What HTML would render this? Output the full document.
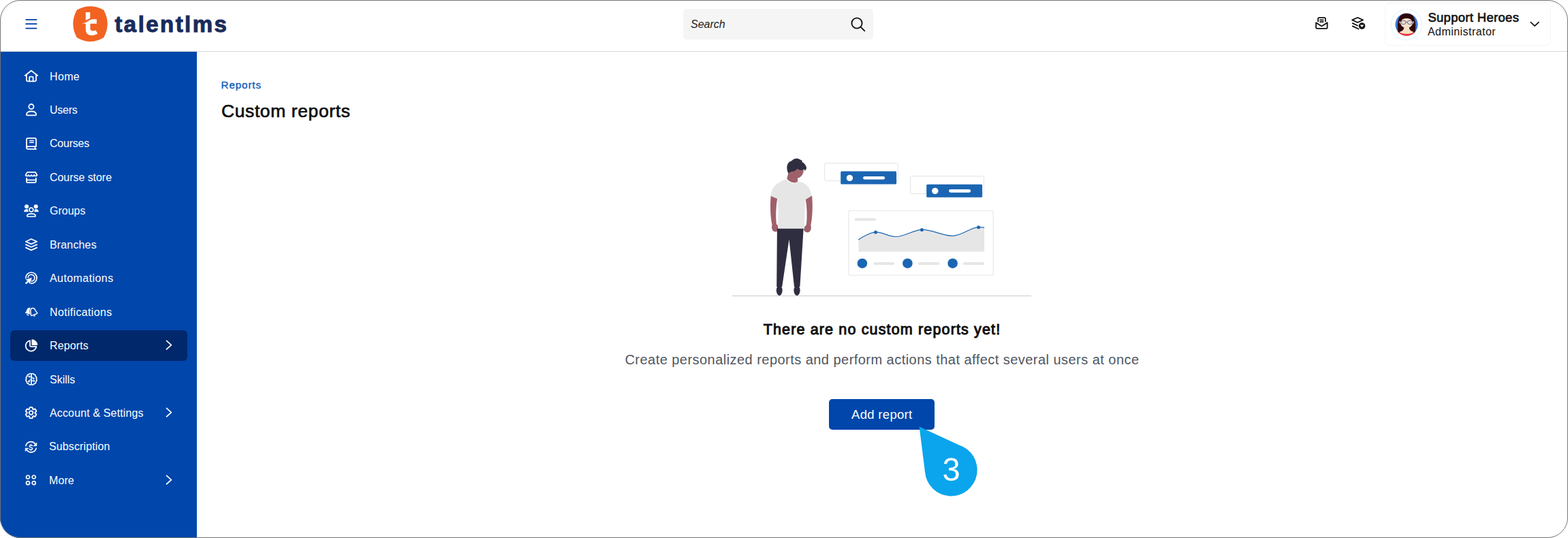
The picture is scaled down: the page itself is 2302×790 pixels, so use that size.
<!DOCTYPE html>
<html lang="en">
<head>
<meta charset="utf-8">
<title>Custom reports - TalentLMS</title>
<style>
*{box-sizing:border-box;margin:0;padding:0}
html,body{width:2302px;height:790px;overflow:hidden;background:#fff}
body{position:relative;font-family:"Liberation Sans",sans-serif;color:#0f0f0f}
.frame{position:absolute;left:0;top:0;width:2302px;height:790px;border:1px solid #747474;border-radius:30px;pointer-events:none;box-shadow:0 0 0 40px #fff;z-index:50}
header{position:absolute;left:0;top:0;width:2302px;height:76px;background:#fff;border-bottom:1px solid #d6dadd}
.side{position:absolute;left:0;top:76px;width:288.600px;height:714px;background:#0046ab}
.side .item{position:absolute;left:15px;width:260px;height:45px;border-radius:6px;color:#fff;font-size:16px;text-decoration:none;margin-top:-76px}
.side .item.active{background:#00286b}
.side .ic{position:absolute;left:19px;top:10.05px;width:24px;height:24px;overflow:visible}
.side .lb{position:absolute;top:0;line-height:45px;white-space:nowrap}
.side .chev{position:absolute;left:229px;top:14.200px;width:10px;height:16px;overflow:visible}
.abs{position:absolute;white-space:nowrap}

</style>
</head>
<body>
<header>
<svg class="abs" style="left:37px;top:27px" width="18" height="16" viewBox="0 0 18 16"><path d="M1.200 1.800H16.600M1.200 8.200H16.600M1.200 14.600H16.600" stroke="#0038a8" stroke-width="1.800" stroke-linecap="round" fill="none"/></svg>
<svg class="abs" style="left:107px;top:9px" width="52" height="53" viewBox="0 0 52 53"><path d="M6.500 6.500 Q25.700 -3.900 44.500 6.500 Q55.100 26 44.500 45.400 Q25.700 56.600 6.500 45.400 Q-3.900 26 6.500 6.500Z" fill="#f26322" stroke="#f26322" stroke-width="2" stroke-linejoin="round"/><path d="M18.800 8.900 H25.300 V17.400 C23.500 18.600 21 20 18.800 20.900Z" fill="#fff"/><path d="M13 25.600 C17 25.300 21 23.200 24 21 C25.500 20 27 19.300 29 19.200 H34.900 V25.700 H25.500 V33 C25.500 36.200 28.500 37.200 33.400 35.400 L36.500 40.300 C31 43.800 25 44 21.500 41 C19.500 39.200 18.800 36.500 18.800 33 V25.700Z" fill="#fff"/></svg>
<div class="abs" id="logo" style="left:168.400px;top:16.800px;font-size:33px;font-weight:bold;line-height:38px;color:#1a2b5c;-webkit-text-stroke:1px #1a2b5c;letter-spacing:2.450px">talentlms</div>
<div class="abs" style="left:1002.700px;top:12.700px;width:279.700px;height:45.700px;background:#f5f5f5;border-radius:5px"></div>
<div class="abs" id="search" style="left:1014px;top:26px;font-size:16px;font-style:italic;line-height:20px;color:#222">Search</div>
<svg class="abs" style="left:1248px;top:24px" width="24" height="24" viewBox="0 0 24 24"><circle cx="10" cy="10" r="7.6" fill="none" stroke="#111" stroke-width="1.9"/><path d="M15.6 15.6 L21.3 21.3" stroke="#111" stroke-width="1.9" stroke-linecap="round"/></svg>
<svg class="abs" style="left:1930px;top:24px" width="22" height="20" viewBox="0 0 22 20"><g fill="none" stroke="#111" stroke-width="1.800" stroke-linecap="round" stroke-linejoin="round"><path d="M5.100 7.400 V3.500 a1.600 1.600 0 0 1 1.600 -1.600 h7.600 a1.600 1.600 0 0 1 1.600 1.600 v3.900"/><path d="M8 5.300h4.700M8 8h4.700" stroke-width="1.750"/><path d="M2.100 9.300 L9.400 14 a1.700 1.700 0 0 0 1.900 0 L18.600 9.300 V16.500 a1.400 1.400 0 0 1 -1.400 1.400 H3.500 a1.400 1.400 0 0 1 -1.400 -1.400Z"/></g></svg>
<svg class="abs" style="left:1983px;top:24px" width="23" height="20" viewBox="0 0 23 20"><g fill="none" stroke="#111" stroke-width="1.800" stroke-linecap="round" stroke-linejoin="round"><path d="M2.100 5.400 L10.150 1.800 L18 5.400 L10.150 9Z"/><path d="M2.700 10.100 L10 13.500M2.700 14.400 L11.500 18.500"/></g><circle cx="16.500" cy="14.100" r="4.850" fill="#111"/><path d="M13.900 12.800 h5.200 l-2.600 3.200z" fill="#fff" stroke="#fff" stroke-width="0.300" stroke-linejoin="round"/></svg>
<div class="abs" style="left:2032.800px;top:4.100px;width:243.800px;height:62.900px;border:1px solid #f5f5f6;border-radius:7px"></div>
<svg class="abs" style="left:2041.400px;top:12px" width="48" height="48" viewBox="0 0 48 48"><defs><clipPath id="av"><circle cx="24" cy="24" r="16.600"/></clipPath></defs><circle cx="24" cy="24" r="22.600" fill="none" stroke="#dbe8f9" stroke-width="0.800" stroke-dasharray="103 2 3.500 2 200"/><g clip-path="url(#av)"><rect x="0" y="0" width="48" height="48" fill="#3d7ad9"/><path d="M11.500 36 C9.500 22 11 7.500 24 7.500 C37 7.500 38.500 22 36.500 36 Z" fill="#2e0609"/><path d="M6 48 C6 38 13 33.500 24 33.500 C35 33.500 42 38 42 48Z" fill="#ee2e2e"/><path d="M13.500 35 C17 33.800 19.800 32.800 20.300 28 h7.400 c0.500 4.800 3.300 5.800 6.800 7 C30.500 38.800 17.500 38.800 13.500 35z" fill="#f7e0c6"/><ellipse cx="24" cy="21.800" rx="8.700" ry="7.500" fill="#f7e0c6"/><path d="M15.500 20.500 l-2.800 -1.200 l2.600 5zM32.500 20.500 l2.800 -1.200 l-2.600 5z" fill="#f7e0c6"/><path d="M13.500 19.500 C16 13.500 32 13.500 34.500 19.500 C35 11.500 30 8 24 8 C18 8 13 11.500 13.500 19.500z" fill="#2e0609"/><g fill="#f3dcc8" fill-opacity="0.500" stroke="#5a67a8" stroke-width="1"><rect x="15.800" y="18.300" width="7" height="5.200" rx="2.500"/><rect x="25.400" y="18.300" width="7" height="5.200" rx="2.500"/><path d="M22.800 20.300h2.600M15.800 20l-2 -0.600M32.400 20l2 -0.600" fill="none"/></g></g></svg>
<div class="abs" id="uname" style="left:2096.400px;top:15.200px;font-size:18.400px;line-height:22px;color:#111;-webkit-text-stroke:0.650px #111;letter-spacing:0.360px">Support Heroes</div>
<div class="abs" id="urole" style="left:2096px;top:37.400px;font-size:16px;line-height:20px;color:#111;letter-spacing:0.45px">Administrator</div>
<svg class="abs" style="left:2245px;top:30px" width="16" height="10" viewBox="0 0 16 10"><path d="M2.300 2.700 L8.150 8.200 L14 2.700" fill="none" stroke="#111" stroke-width="1.700" stroke-linecap="round" stroke-linejoin="round"/></svg>
</header>
<nav class="side">
<a class="item" style="top:90px"><svg class="ic" viewBox="-12 -12 24 24"><g fill="none" stroke="#fff" stroke-width="1.8" stroke-linecap="round" stroke-linejoin="round"><path d="M-9.200 -1 L-0.100 -8.200 L9.100 -1"/><path d="M-7.100 -2.500 V5.600 a1.800 1.800 0 0 0 1.800 1.800 H5.200 a1.800 1.800 0 0 0 1.800 -1.800 V-2.500"/><path d="M-2.800 7.400 V1.700 a1.100 1.100 0 0 1 1.100 -1.100 H1.500 a1.100 1.100 0 0 1 1.100 1.100 V7.400"/></g></svg><span class="lb" style="left:58px;letter-spacing:0.35px">Home</span></a>
<a class="item" style="top:139px"><svg class="ic" viewBox="-12 -12 24 24"><g fill="none" stroke="#fff" stroke-width="1.8" stroke-linecap="round" stroke-linejoin="round"><circle cx="-0.100" cy="-4.400" r="3.600"/><path d="M-7.100 7.300 C-7.100 4.300 -4.500 2.500 0 2.500 C4.500 2.500 7.100 4.300 7.100 7.300 a1 1 0 0 1 -1 1 H-6.100 a1 1 0 0 1 -1 -1Z"/></g></svg><span class="lb" style="left:58px;letter-spacing:-0.25px">Users</span></a>
<a class="item" style="top:188px"><svg class="ic" viewBox="-12 -12 24 24"><g fill="none" stroke="#fff" stroke-width="1.8" stroke-linecap="round" stroke-linejoin="round"><path d="M7 8.900 H-5 a1.900 1.900 0 0 1 0 -3.800 H7 V-5.200 a2 2 0 0 0 -2 -2 H-4.800 a2.200 2.200 0 0 0 -2.200 2.200 V7"/><path d="M5.500 5.100 V8.900"/><path d="M-2.300 -3.500 H3.300 M-2.300 -0.700 H3.300" stroke-width="1.600"/></g></svg><span class="lb" style="left:58px;letter-spacing:-0.23px">Courses</span></a>
<a class="item" style="top:238px"><svg class="ic" viewBox="-12 -12 24 24"><g fill="none" stroke="#fff" stroke-width="1.8" stroke-linecap="round" stroke-linejoin="round"><path d="M-5.800 -7.200 H5.800 L8.400 -3.100 a2.100 1.400 0 0 1 -4.200 0 a2.100 1.400 0 0 1 -4.200 0 a2.100 1.400 0 0 1 -4.200 0 a2.100 1.400 0 0 1 -4.200 0 Z"/><path d="M-6.900 0.900 V6.400 a1.800 1.800 0 0 0 1.800 1.800 H5 a1.800 1.800 0 0 0 1.800 -1.800 V0.900" stroke-linecap="butt"/><path d="M-6.900 4.400 H6.800"/></g></svg><span class="lb" style="left:58px;letter-spacing:-0.05px">Course store</span></a>
<a class="item" style="top:287px"><svg class="ic" viewBox="-12 -12 24 24"><circle cx="-6.900" cy="-5.750" r="3" fill="#fff"/><circle cx="6.700" cy="-5.750" r="3" fill="#fff"/><path d="M-10.500 1.700 C-10.500 -0.300 -9 -1.500 -6.900 -1.500 C-4.500 -1.500 -3 -0.300 -3 1.700Z M10.300 1.700 C10.300 -0.300 8.800 -1.500 6.700 -1.500 C4.300 -1.500 2.800 -0.300 2.800 1.700Z" fill="#fff" stroke="#fff" stroke-width="0.800" stroke-linejoin="round"/><circle cx="-0.100" cy="-0.900" r="5" fill="#0046ab"/><g fill="none" stroke="#fff" stroke-width="1.7" stroke-linecap="round" stroke-linejoin="round"><circle cx="-0.100" cy="-0.900" r="3"/><path d="M-6.200 8.200 C-6.200 6.200 -4 4.900 -0.050 4.900 C4 4.900 6.100 6.200 6.100 8.200 a0.800 0.800 0 0 1 -0.800 0.800 H-5.400 a0.800 0.800 0 0 1 -0.800 -0.800Z"/></g></svg><span class="lb" style="left:58px;letter-spacing:0px">Groups</span></a>
<a class="item" style="top:337px"><svg class="ic" viewBox="-12 -12 24 24"><g fill="none" stroke="#fff" stroke-width="1.8" stroke-linecap="round" stroke-linejoin="round"><path d="M-8.200 -4.300 L-0.100 -8.050 L8.200 -4.300 L-0.100 -0.650Z"/><path d="M-8.100 0.150 L-0.100 3.800 L8.200 0.150"/><path d="M-8.100 4.600 L-0.100 8.350 L8.200 4.600"/></g></svg><span class="lb" style="left:58px;letter-spacing:0.15px">Branches</span></a>
<a class="item" style="top:386px"><svg class="ic" viewBox="-12 -12 24 24"><g fill="none" stroke="#fff" stroke-width="1.7" stroke-linecap="round" stroke-linejoin="round"><path d="M-8.100 0.650 A8.100 8.100 0 1 1 -0.600 8.200"/><path d="M-4.750 -0.700 A4.850 4.850 0 1 1 0.500 4.950"/></g><path d="M0.400 0.300 L-7.800 2.700 L-5.100 4.100 L-8.700 7.700 L-7.400 9 L-3.800 5.400 L-2.400 8.400Z" fill="#fff" stroke="#fff" stroke-width="0.700" stroke-linejoin="round"/></svg><span class="lb" style="left:58px;letter-spacing:0.42px">Automations</span></a>
<a class="item" style="top:436px"><svg class="ic" viewBox="-12 -12 24 24"><g transform="translate(0 0.450)"><path d="M-2.600 -6.600 C-5.500 -6.800 -6.500 -3.500 -7.200 -1.800 C-7.600 -0.800 -8.400 -0.200 -8.900 0.400 C-9.100 0.900 -8.900 1.300 -8.300 1.500 L-2.400 3 C-1.800 3 -1.700 2.400 -1.800 1.800 C-2.600 -0.800 -2.400 -3.600 -1.300 -5.600 C-1.600 -6.100 -2 -6.500 -2.600 -6.600Z" fill="#fff"/><path d="M1.800 -6 C-0.600 -5.700 -1.400 -3.200 -1.100 -0.800 L-0.500 4.200 C-0.400 4.900 0 5.100 0.600 4.900 L8.200 2 C8.800 1.700 8.900 1.200 8.500 0.700 C7.300 -0.200 6.500 -1.600 5.700 -3.200 C4.900 -5 3.700 -6.200 1.800 -6Z" fill="#0046ab" stroke="#0046ab" stroke-width="2.700" stroke-linejoin="round"/><path d="M1.800 -6 C-0.600 -5.700 -1.400 -3.200 -1.100 -0.800 L-0.500 4.200 C-0.400 4.900 0 5.100 0.600 4.900 L8.200 2 C8.800 1.700 8.900 1.200 8.500 0.700 C7.300 -0.200 6.500 -1.600 5.700 -3.200 C4.900 -5 3.700 -6.200 1.800 -6Z" fill="none" stroke="#fff" stroke-width="1.500" stroke-linejoin="round"/><path d="M-6.300 3.600 L-4.200 4.500 M3.500 5.800 L5.500 4.900" stroke="#fff" stroke-width="1.300" stroke-linecap="round" fill="none"/></g></svg><span class="lb" style="left:58px;letter-spacing:0.34px">Notifications</span></a>
<a class="item active" style="top:485px"><svg class="ic" viewBox="-12 -12 24 24"><g transform="translate(0 0.550)"><path d="M0.900 -1.100 V-8.800 A7.900 7.900 0 0 1 8.800 -1.100Z" fill="#fff" stroke="#fff" stroke-width="0.900" stroke-linejoin="round"/><path d="M-2 -7.500 A7.850 7.850 0 1 0 7.350 1.300 H-0.500 a1.500 1.500 0 0 1 -1.500 -1.500 Z" fill="none" stroke="#fff" stroke-width="1.8" stroke-linecap="round" stroke-linejoin="round"/></g></svg><span class="lb" style="left:58px;letter-spacing:0.12px">Reports</span><svg class="chev" viewBox="0 0 10 16"><path d="M0.550 1.450 L7.450 7.600 L0.550 13.750" fill="none" stroke="#fff" stroke-width="1.700" stroke-linecap="round" stroke-linejoin="round"/></svg></a>
<a class="item" style="top:535px"><svg class="ic" viewBox="-12 -12 24 24"><g fill="none" stroke="#fff" stroke-width="1.7" stroke-linecap="round" stroke-linejoin="round"><path d="M0 -7.400 A2.100 2.100 0 0 0 -3.800 -7.200 A2.400 2.400 0 0 0 -6.200 -4.300 A2.500 2.500 0 0 0 -7.300 -0.700 A2.500 2.500 0 0 0 -6.700 3.200 A2.500 2.500 0 0 0 -4.200 6.300 A2.300 2.300 0 0 0 0 6.900 A2.300 2.300 0 0 0 4.200 6.300 A2.500 2.500 0 0 0 6.700 3.200 A2.500 2.500 0 0 0 7.300 -0.700 A2.500 2.500 0 0 0 6.200 -4.300 A2.400 2.400 0 0 0 3.800 -7.200 A2.100 2.100 0 0 0 0 -7.400 V6.900"/></g><g transform="translate(0 0.550)" fill="none" stroke="#fff" stroke-width="1.100" stroke-linecap="round"><path d="M0 -4.500 H-2.600 M0 -3.300 H1.800 L2.700 -2.300 M0 0.200 H-2 L-3.200 1.800 M0 1.600 H2.800"/><circle cx="-3.100" cy="-4.500" r="0.900" fill="#fff"/><circle cx="3.200" cy="-1.700" r="0.900"/><circle cx="-3.600" cy="2.700" r="0.900"/><circle cx="3.800" cy="1.800" r="0.900"/></g></svg><span class="lb" style="left:58px;letter-spacing:0px">Skills</span></a>
<a class="item" style="top:584px"><svg class="ic" viewBox="-12 -12 24 24"><g fill="none" stroke="#fff" stroke-width="1.8" stroke-linecap="round" stroke-linejoin="round"><path d="M2.00 -5.29 L1.70 -7.72 A8.10 8.10 0 0 0 -2.50 -7.72 L-2.80 -5.29 A5.90 5.90 0 0 0 -3.87 -4.67 L-6.13 -5.63 A8.10 8.10 0 0 0 -8.22 -2.00 L-6.27 -0.52 A5.90 5.90 0 0 0 -6.27 0.72 L-8.22 2.20 A8.10 8.10 0 0 0 -6.13 5.83 L-3.87 4.87 A5.90 5.90 0 0 0 -2.80 5.49 L-2.50 7.92 A8.10 8.10 0 0 0 1.70 7.92 L2.00 5.49 A5.90 5.90 0 0 0 3.07 4.87 L5.33 5.83 A8.10 8.10 0 0 0 7.42 2.20 L5.47 0.72 A5.90 5.90 0 0 0 5.47 -0.52 L7.42 -2.00 A8.10 8.10 0 0 0 5.33 -5.63 L3.07 -4.67 A5.90 5.90 0 0 0 2.00 -5.29 Z"/><circle cx="-0.400" cy="0.100" r="2.800"/></g></svg><span class="lb" style="left:58px;letter-spacing:0.14px">Account &amp; Settings</span><svg class="chev" viewBox="0 0 10 16"><path d="M0.550 1.450 L7.450 7.600 L0.550 13.750" fill="none" stroke="#fff" stroke-width="1.700" stroke-linecap="round" stroke-linejoin="round"/></svg></a>
<a class="item" style="top:633px"><svg class="ic" viewBox="-12 -12 24 24"><g fill="none" stroke="#fff" stroke-width="1.6" stroke-linecap="round" stroke-linejoin="round"><path d="M-8.100 -0.270 A7.700 7.700 0 0 1 5.500 -3.300"/><path d="M7.100 3.200 A7.700 7.700 0 0 1 -6.500 6"/><path d="M1.500 -0.400 C1 -1.400 -2.800 -1.700 -2.800 0.200 C-2.800 2.300 1.700 1.600 1.700 3.800 C1.700 5.800 -2.300 5.500 -3 4.300 M-0.600 -2.500 V-1.200 M-0.600 5.200 V6.300" stroke-width="1.400"/></g><path d="M7.800 -4.900 V-0.300 H3.200Z M-8.800 3.200 V7.600 L-4.400 3.200Z" fill="#fff" stroke="#fff" stroke-width="0.800" stroke-linejoin="round"/></svg><span class="lb" style="left:57px;letter-spacing:0.13px">Subscription</span></a>
<a class="item" style="top:683px"><svg class="ic" viewBox="-12 -12 24 24"><g fill="none" stroke="#fff" stroke-width="1.7" stroke-linecap="round" stroke-linejoin="round"><circle cx="-5" cy="-4.500" r="2.500"/><circle cx="3.700" cy="-4.500" r="2.500"/><circle cx="-5" cy="4.150" r="2.500"/><circle cx="3.700" cy="4.150" r="2.500"/></g></svg><span class="lb" style="left:57px;letter-spacing:0.1px">More</span><svg class="chev" viewBox="0 0 10 16"><path d="M0.550 1.450 L7.450 7.600 L0.550 13.750" fill="none" stroke="#fff" stroke-width="1.700" stroke-linecap="round" stroke-linejoin="round"/></svg></a>
</nav>
<main>
<div class="abs" id="crumb" style="left:324.600px;top:114.500px;font-size:15.200px;line-height:20px;color:#0c5cb8;-webkit-text-stroke:0.350px #0c5cb8;letter-spacing:0.880px">Reports</div>
<h1 class="abs" id="title" style="left:325px;top:147px;font-size:26.4px;font-weight:normal;line-height:32px;color:#0f0f0f;-webkit-text-stroke:0.7px #0f0f0f;letter-spacing:0.650px">Custom reports</h1>
<svg class="abs" style="left:1070px;top:225px" width="450" height="215" viewBox="1070 225 450 215">
<rect x="1075" y="434" width="439" height="1" fill="#cbcbcb"/>
<!-- cards -->
<rect x="1210.700" y="239.500" width="107.600" height="25.800" rx="2.200" fill="#fff" stroke="#e3e3e3" stroke-width="1"/>
<rect x="1234.200" y="251.500" width="81.900" height="19" rx="1.600" fill="#1b66b3"/>
<circle cx="1247.400" cy="261.400" r="4.700" fill="#fff"/>
<rect x="1267.100" y="258.900" width="32" height="4.700" rx="2.350" fill="#fff"/>
<rect x="1336.500" y="258.700" width="107.800" height="25.900" rx="2.200" fill="#fff" stroke="#e3e3e3" stroke-width="1"/>
<rect x="1360.200" y="270.800" width="81.900" height="19" rx="1.600" fill="#1b66b3"/>
<circle cx="1372.800" cy="280.400" r="4.700" fill="#fff"/>
<rect x="1393.100" y="278" width="32" height="4.700" rx="2.350" fill="#fff"/>
<!-- chart card -->
<rect x="1245.800" y="309.200" width="212.400" height="95" rx="2.500" fill="#fff" stroke="#e6e6e6" stroke-width="1.100"/>
<rect x="1254.800" y="320.200" width="31.300" height="4" rx="2" fill="#e6e6e6"/>
<path d="M1260.500 351.700 C1270 345.500 1277 341.500 1285.500 340.800 C1296 340.500 1304 347.500 1315.100 347.500 C1328 347.500 1341 337.600 1353.400 337.100 C1368 336.800 1383 346.300 1398 346.300 C1413 346.300 1424 334 1436.600 333.600 C1440 333.500 1443 333.800 1445.100 334.200 V369.500 H1260.500Z" fill="#e6e6e6"/>
<path d="M1260.200 351.900 C1270 345.500 1277 341.500 1285.500 340.800 C1296 340.500 1304 347.500 1315.100 347.500 C1328 347.500 1341 337.600 1353.400 337.100 C1368 336.800 1383 346.300 1398 346.300 C1413 346.300 1424 334 1436.600 333.600 C1440 333.500 1443 333.800 1445.100 334.200" fill="none" stroke="#1b66b3" stroke-width="1.200"/>
<circle cx="1285.500" cy="340.900" r="2.500" fill="#1b66b3"/>
<circle cx="1353.400" cy="337.400" r="2.500" fill="#1b66b3"/>
<circle cx="1436.600" cy="333.700" r="2.500" fill="#1b66b3"/>
<circle cx="1265.900" cy="386.700" r="7.300" fill="#1b66b3"/>
<circle cx="1332.400" cy="386.700" r="7.300" fill="#1b66b3"/>
<circle cx="1398.600" cy="386.700" r="7.300" fill="#1b66b3"/>
<rect x="1282.200" y="385" width="31" height="4" rx="2" fill="#e6e6e6"/>
<rect x="1347.700" y="385" width="31.900" height="4" rx="2" fill="#e6e6e6"/>
<rect x="1413.900" y="385" width="31.200" height="4" rx="2" fill="#e6e6e6"/>
<!-- person -->
<g id="person">
<!-- arms -->
<path d="M1131.800 287 C1130.400 300 1130.800 318 1133.500 330 C1132.300 334 1133.200 338.500 1136.600 340 C1140 341 1143.300 339 1143.800 336 C1143.300 332.500 1141.500 330.500 1139.900 329 C1138.600 318 1139 305 1141.200 291Z" fill="#9e616a"/>
<path d="M1192 287 C1193.400 300 1193 318 1190.300 331 C1191.500 335 1190.600 339.500 1187.200 341 C1183.800 342 1180.500 340 1180 337 C1180.500 333.500 1182.300 331.500 1183.900 330 C1185.200 318 1184.800 305 1182.600 291Z" fill="#9e616a"/>
<!-- legs -->
<path d="M1140.900 335 H1179.700 L1174.400 421 H1166 L1158.500 351.500 L1148.200 421 H1140.200Z" fill="#2f2e41"/>
<ellipse cx="1144.200" cy="426.600" rx="4.400" ry="7.400" fill="#2f2e41"/>
<ellipse cx="1170" cy="426.600" rx="4.600" ry="7.400" fill="#2f2e41"/>
<!-- neck + head -->
<path d="M1158.200 251 L1155.200 262.300 C1160 269 1168 269.500 1171 266.500 L1171.200 258 L1166 249Z" fill="#9e616a"/>
<path d="M1160 246 C1166 242 1176 243 1179.500 248 C1180.500 253 1178 259 1172.500 261.200 C1168 262 1163 259 1160.500 254Z" fill="#9e616a"/>
<!-- shirt -->
<path d="M1154.500 263.300 C1158 270 1168 270.500 1171 266.800 C1181 267.500 1189.500 273 1191.800 287.500 L1182.700 293 C1181.500 305 1181 320 1180.800 335.700 H1142 C1142.200 320 1143.400 305 1141.300 292 L1132 288 C1132 276 1140 267.500 1154.500 263.300Z" fill="#e6e6e6"/>
<!-- hair -->
<path d="M1157.400 254.600 C1154.500 249 1154.600 241.500 1158.400 238.300 C1159.600 237.200 1161 236.700 1162.200 236.300 C1164 234 1166.500 232.800 1169.100 232.800 C1171 232.700 1173 233.300 1174.400 234.200 C1175.800 234.900 1177 235.700 1178.200 236.200 L1176.900 237.300 C1179 238.500 1180.800 240 1181.800 241.500 C1183.200 243.300 1184 245.300 1184.100 247.200 L1181.700 251 L1180.500 248.600 C1178.800 249.600 1177 249.900 1175.400 249.700 C1173.500 249.400 1171.800 248.500 1170.400 247.400 C1169.500 248.900 1168.200 250.200 1166.600 250.900 C1165 251.700 1163 251.700 1161.500 251.900 C1160 252.600 1158.600 253.600 1157.400 254.600Z" fill="#2f2e41"/>
</g>
</svg>

<div class="abs" id="empty-h" style="left:288px;width:2014px;text-align:center;top:470px;font-size:21.5px;font-weight:normal;line-height:28px;color:#0f0f0f;-webkit-text-stroke:1px #0f0f0f;letter-spacing:1.150px">There are no custom reports yet!</div>
<div class="abs" id="empty-p" style="left:288px;width:2014px;text-align:center;top:516.300px;font-size:20px;line-height:24px;color:#50565e;letter-spacing:0.460px">Create personalized reports and perform actions that affect several users at once</div>
<button type="button" class="abs" id="btn" style="border:0;padding:0;margin:0;font-family:inherit;cursor:pointer;display:block;left:1217.400px;top:586px;width:154.800px;height:45.200px;background:#0046ab;border-radius:5px;color:#fff;font-size:18.500px;line-height:45px;text-align:center;letter-spacing:0.3px">Add report</button>
<svg class="abs" style="left:1340px;top:620px" width="100" height="112" viewBox="1340 620 100 112"><path d="M1349.600 626.400 L1408 653.500 A38.400 38.400 0 1 1 1358 693 Z" fill="#0aa5ec"/><text id="badge" transform="translate(1396.700 705.600) scale(0.960 1)" x="0" y="0" text-anchor="middle" font-family="'Liberation Sans',sans-serif" font-size="49" fill="#fff">3</text></svg>
</main>
<div class="frame"></div>
</body>
</html>
